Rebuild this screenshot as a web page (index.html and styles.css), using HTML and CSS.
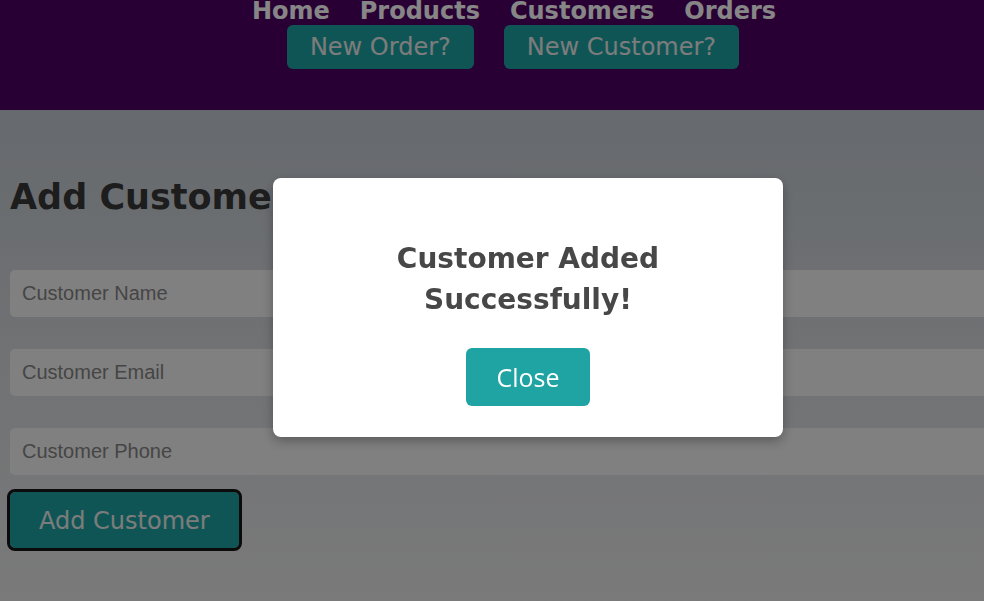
FILE: index.html
```html
<!DOCTYPE html>
<html>
<head>
<meta charset="utf-8">
<title>Add Customer</title>
<link rel="stylesheet" href="styles.css">
</head>
<body>
<header class="site-header">
  <ul class="nav-links">
    <li><a href="#">Home</a></li>
    <li><a href="#">Products</a></li>
    <li><a href="#">Customers</a></li>
    <li><a href="#">Orders</a></li>
  </ul>
  <div class="quick-actions">
    <button class="quick-btn">New Order?</button>
    <button class="quick-btn">New Customer?</button>
  </div>
</header>
<main class="content">
  <h1 class="page-title">Add Customer</h1>
  <form class="customer-form">
    <input class="field" type="text" placeholder="Customer Name">
    <input class="field" type="email" placeholder="Customer Email">
    <input class="field" type="tel" placeholder="Customer Phone">
    <button class="submit-btn" type="button">Add Customer</button>
  </form>
</main>
<div class="overlay">
  <div class="modal">
    <h2 class="modal-title">Customer Added<br>Successfully!</h2>
    <button class="close-btn" type="button">Close</button>
  </div>
</div>
</body>
</html>
```
FILE: styles.css
```css
html, body {
  margin: 0;
  padding: 0;
}
body {
  min-height: 601px;
  background: linear-gradient(to bottom, #4c005f 0, #4c005f 110px, #bbc1c8 110px, #dedede 601px);
  font-family: "DejaVu Sans", Verdana, sans-serif;
  overflow: hidden;
}
.site-header {
  height: 110px;
  background: #4c005f;
  padding-left: 42px;
  box-sizing: border-box;
}
.nav-links {
  list-style: none;
  margin: 0;
  padding: 0 0 0 2px;
  display: flex;
  justify-content: center;
  gap: 30px;
  font-size: 24px;
  line-height: 22px;
}
.nav-links a {
  color: #f5f5f5;
  text-decoration: none;
  font-weight: bold;
}
.quick-actions {
  display: flex;
  justify-content: center;
  gap: 30px;
  margin-top: 3px;
}
.quick-btn {
  font-family: "DejaVu Sans", Verdana, sans-serif;
  font-size: 24px;
  line-height: 28px;
  padding: 8px 23px;
  border: none;
  border-radius: 6px;
  background: #1d9c9c;
  color: #e2e2e2;
}
.content {
  padding: 0 10px;
}
.page-title {
  margin: 67px 0 0;
  font-size: 35px;
  line-height: 41px;
  font-weight: bold;
  color: #363638;
}
.customer-form {
  display: flex;
  flex-direction: column;
  align-items: flex-start;
  margin-top: 52px;
}
.field {
  width: 100%;
  box-sizing: content-box;
  margin: 0 0 32px;
  padding: 12px 12px;
  height: 23px;
  font-family: "Liberation Sans", Arial, sans-serif;
  font-size: 20px;
  border: none;
  border-radius: 5px;
  background: #e9e9e9;
  color: #333;
}
.field:last-of-type {
  margin-bottom: 17px;
}
.field::placeholder {
  color: #7f7f7f;
}
.submit-btn {
  font-family: "DejaVu Sans", Verdana, sans-serif;
  font-size: 24px;
  line-height: 28px;
  padding: 15px 29px 13px;
  border: none;
  border-radius: 5px;
  background: #1d9c9c;
  color: #e2e2e2;
  outline: 3px solid #141414;
}
.overlay {
  position: fixed;
  inset: 0;
  background: rgba(0, 0, 0, 0.45);
}
.modal {
  position: absolute;
  left: 273px;
  top: 178px;
  width: 510px;
  height: 259px;
  box-sizing: border-box;
  background: #ffffff;
  border-radius: 8px;
  box-shadow: 0 4px 12px rgba(0, 0, 0, 0.3);
  padding: 60px 30px 30px;
  display: flex;
  flex-direction: column;
  align-items: center;
}
.modal-title {
  margin: 0;
  font-size: 28px;
  line-height: 41px;
  font-weight: bold;
  text-align: center;
  color: #474747;
}
.close-btn {
  margin-top: 28px;
  font-family: "Open Sans", sans-serif;
  font-size: 25px;
  line-height: 34px;
  padding: 12px 30px;
  border: none;
  border-radius: 6px;
  background: #1fa3a3;
  color: #ffffff;
}
```
